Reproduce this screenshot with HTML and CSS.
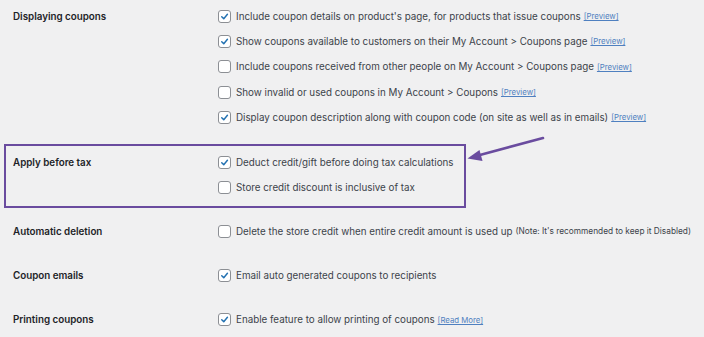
FILE: index.html
```html
<!DOCTYPE html>
<html lang="en">
    <head>
        <meta charset="UTF-8">
        <title>Coupon settings</title>
        <link rel="stylesheet" href="styles.css">
    </head>
    <body>
        <div class="settings">
            <div class="row first">
                <div class="label">Displaying coupons</div>
                <div class="options">
                    <div class="opt"><span class="cb checked"><svg viewBox="0 0 12 12"><path d="M3 6.2 L5.2 8.4 L9.2 3.6"/></svg></span>Include coupon details on product's page, for products that issue coupons <a href="#" class="link">[Preview]</a></div>
                    <div class="opt"><span class="cb checked"><svg viewBox="0 0 12 12"><path d="M3 6.2 L5.2 8.4 L9.2 3.6"/></svg></span>Show coupons available to customers on their My Account &gt; Coupons page <a href="#" class="link">[Preview]</a></div>
                    <div class="opt"><span class="cb"></span>Include coupons received from other people on My Account &gt; Coupons page <a href="#" class="link">[Preview]</a></div>
                    <div class="opt"><span class="cb"></span>Show invalid or used coupons in My Account &gt; Coupons <a href="#" class="link">[Preview]</a></div>
                    <div class="opt"><span class="cb checked"><svg viewBox="0 0 12 12"><path d="M3 6.2 L5.2 8.4 L9.2 3.6"/></svg></span>Display coupon description along with coupon code (on site as well as in emails) <a href="#" class="link">[Preview]</a></div>
                </div>
            </div>

            <div class="row highlight">
                <div class="label">Apply before tax</div>
                <div class="options">
                    <div class="opt"><span class="cb checked"><svg viewBox="0 0 12 12"><path d="M3 6.2 L5.2 8.4 L9.2 3.6"/></svg></span>Deduct credit/gift before doing tax calculations</div>
                    <div class="opt"><span class="cb"></span>Store credit discount is inclusive of tax</div>
                </div>
            </div>

            <div class="row">
                <div class="label">Automatic deletion</div>
                <div class="options">
                    <div class="opt"><span class="cb"></span>Delete the store credit when entire credit amount is used up <span class="note">(Note: It's recommended to keep it Disabled)</span></div>
                </div>
            </div>

            <div class="row">
                <div class="label">Coupon emails</div>
                <div class="options">
                    <div class="opt"><span class="cb checked"><svg viewBox="0 0 12 12"><path d="M3 6.2 L5.2 8.4 L9.2 3.6"/></svg></span>Email auto generated coupons to recipients</div>
                </div>
            </div>

            <div class="row">
                <div class="label">Printing coupons</div>
                <div class="options">
                    <div class="opt"><span class="cb checked"><svg viewBox="0 0 12 12"><path d="M3 6.2 L5.2 8.4 L9.2 3.6"/></svg></span>Enable feature to allow printing of coupons <a href="#" class="link">[Read More]</a></div>
                </div>
            </div>
        </div>

        <!-- annotation arrow -->
        <svg class="arrow" width="704" height="337" viewBox="0 0 704 337">
            <line x1="543" y1="138" x2="478" y2="155.5" stroke="#6a4c9f" stroke-width="2.6" stroke-linecap="round"/>
            <polygon points="467.5,158.5 479.5,150 482.5,161" fill="#6a4c9f"/>
        </svg>
    </body>
</html>
```

FILE: styles.css
```css
body {
    margin: 0;
    background-color: #f0f0f1;
    font-family: 'Inter', 'Liberation Sans', sans-serif;
    font-size: 9.8px;
    color: #3c434a;
    width: 704px;
    height: 337px;
    overflow: hidden;
}

.settings {
    padding-top: 3.5px;
}

.row {
    display: grid;
    grid-template-columns: 205px 1fr;
    padding-left: 13px;
    margin-bottom: 19px;
}

.row.first {
    margin-bottom: 14px;
}

.row.highlight {
    width: 451px;
    margin-left: 4px;
    padding: 4px 0 5px 7px;
    border: 2px solid #6a4c9f;
    margin-bottom: 11px;
}

.label {
    font-weight: 600;
    color: #1d2327;
    height: 25px;
    line-height: 25px;
}

.opt {
    height: 25.3px;
    display: flex;
    align-items: center;
    white-space: nowrap;
}

.cb {
    width: 11px;
    height: 11px;
    border: 1px solid #8c8f94;
    border-radius: 3px;
    background-color: #fff;
    margin-right: 5px;
    flex-shrink: 0;
    display: flex;
}

.cb svg {
    width: 11px;
    height: 11px;
    fill: none;
    stroke: #2271b1;
    stroke-width: 1.6;
    stroke-linecap: round;
    stroke-linejoin: round;
}

.link {
    font-size: 7.8px;
    color: #4f80c0;
    margin-left: 3px;
}

.note {
    font-size: 8.3px;
    margin-left: 3px;
}

.arrow {
    position: absolute;
    top: 0;
    left: 0;
    pointer-events: none;
}
```
